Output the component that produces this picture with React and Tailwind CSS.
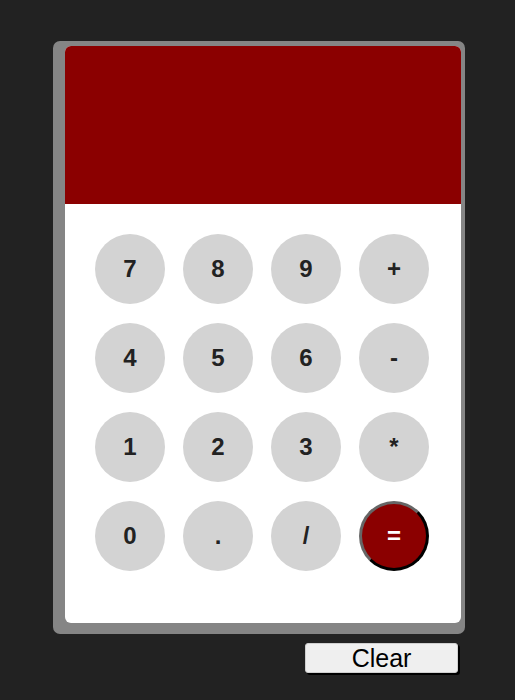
import React from "react";

const keys = ["7","8","9","+","4","5","6","-","1","2","3","*","0",".","/","="];

export default function App() {
  return (
    <div className="min-h-[700px] w-full bg-[#222222] pt-[41px] font-['Liberation_Sans',Arial,sans-serif]">
      <div className="ml-[53px] w-[412px]">
        <div className="rounded-[7px] bg-[#858585] pt-[5px] pl-[12px] pr-[4px] pb-[11px]">
          <div className="w-[396px] overflow-hidden rounded-[6px] bg-white">
            <div className="h-[158px] bg-[#8b0000]" />
            <div className="grid grid-cols-4 gap-x-[18px] gap-y-[19px] pl-[30px] pr-[32px] pt-[30px] pb-[52px]">
              {keys.map((k) =>
                k === "=" ? (
                  <div
                    key={k}
                    className="flex h-[70px] w-[70px] items-center justify-center rounded-full border-[3px] border-t-[#666] border-l-[#666] border-r-black border-b-black bg-[#8b0000] text-[24px] font-bold text-white"
                  >
                    =
                  </div>
                ) : (
                  <div
                    key={k}
                    className="flex h-[70px] w-[70px] items-center justify-center rounded-full bg-[#d3d3d3] text-[24px] font-bold text-[#222]"
                  >
                    {k}
                  </div>
                )
              )}
            </div>
          </div>
        </div>
        <div className="mt-[9px] flex justify-end pr-[7px]">
          <div className="flex h-[30px] w-[153px] items-center justify-center rounded-[3px] border border-[#cfcfcf] bg-[#efefef] text-[25px] leading-none text-black shadow-[2px_2px_0_#000]">
            Clear
          </div>
        </div>
      </div>
    </div>
  );
}
